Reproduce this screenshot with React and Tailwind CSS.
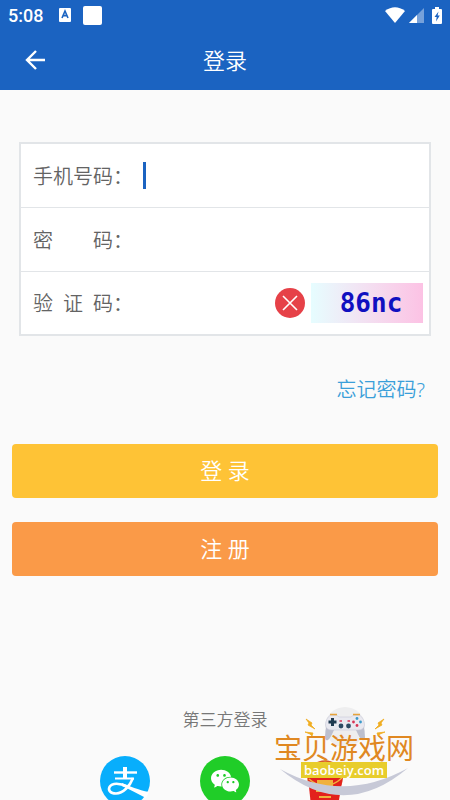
import { useState } from 'react';
import { AiFillWechat } from 'react-icons/ai';

const TEXT_FONT = "font-['Noto_Sans','Noto_Sans_CJK_SC',sans-serif]";

function StatusBar() {
    return (
        <div className="flex h-[30px] items-center pl-2 pr-2 text-white">
            <span className="pt-[2px] font-['Roboto',sans-serif] text-lg font-medium leading-6">5:08</span>
            <svg className="ml-4 h-[14px] w-3" viewBox="0 0 12 14">
                <rect width="12" height="14" rx="1" fill="#fff" />
                <path d="M3 10 L6 3 L9 10 M4.2 7.6 H7.8" fill="none" stroke="#1b63c1" strokeWidth="1.6" />
            </svg>
            <span className="ml-3 h-[19px] w-[19px] rounded-xs bg-white" />
            <div className="ml-auto flex items-center gap-1">
                <svg className="h-4 w-5" viewBox="0 0 20 16">
                    <path d="M0 4 Q10 -3.5 20 4 L10 16 Z" fill="#fff" />
                </svg>
                <svg className="h-[15px] w-[15px]" viewBox="0 0 15 15">
                    <path d="M15 0 V15 H0 Z" fill="#fff" opacity="0.4" />
                    <path d="M8 7 V15 H0 Z" fill="#fff" />
                </svg>
                <svg className="ml-1 h-[17px] w-[10px]" viewBox="0 0 10 17">
                    <path d="M3 0 H7 V2 H9 Q10 2 10 3 V16 Q10 17 9 17 H1 Q0 17 0 16 V3 Q0 2 1 2 H3 Z" fill="#fff" />
                    <path d="M6.5 4.5 L2.5 10 H4.7 L4 14.5 L7.8 8.6 H5.6 Z" fill="#1b63c1" />
                </svg>
            </div>
        </div>
    );
}

function FieldRow({ id, label, children }) {
    return (
        <div className="flex h-16 items-center pl-3 pr-[6px] last:h-[62px]">
            <label htmlFor={id} className="flex shrink-0 pt-[2px] text-xl leading-7 text-[#636363]">
                <span className="w-20 [text-align-last:justify]">{label}</span>
                <span>：</span>
            </label>
            {children}
        </div>
    );
}

function AlipayIcon() {
    return (
        <svg className="h-[50px] w-[50px]" viewBox="0 0 50 50">
            <circle cx="25" cy="25" r="25" fill="#08aefc" />
            <g fill="none" stroke="#fff">
                <path d="M14 16.500 H37" strokeWidth="2.400" />
                <path d="M25 11 V22" strokeWidth="4" />
                <path d="M15 22.500 H34" strokeWidth="2" />
                <path d="M33 22 C30 30 23 37.500 16 37.500 C10 37.500 8 34 9.500 31 C12 26.500 20 27 27 30.500" strokeWidth="2.600" />
            </g>
            <path d="M22 27 C30 30 38 34 49 36 L46 42 C38 38 31 34 22 30 Z" fill="#fff" />
        </svg>
    );
}

function RedPacketIcon() {
    return (
        <svg className="h-[50px] w-[50px]" viewBox="0 0 50 50">
            <circle cx="25" cy="22" r="17" fill="#f7d774" stroke="#d95b2b" strokeWidth="1.500" />
            <path d="M8 21 L43 20 L38 50 H11 Z" fill="#e3211c" />
            <path d="M9 23 Q25 37 42 22" fill="none" stroke="#f0b13c" strokeWidth="1.500" />
            <path d="M18 25 H32 V29 H18 Z M16 35 H34 M19 41 H31" fill="#f0b13c" stroke="#f0b13c" strokeWidth="2" />
        </svg>
    );
}

function SiteBadge() {
    return (
        <div className="pointer-events-none absolute bottom-0 right-[34px] flex h-24 w-36 flex-col items-center">
            <svg className="absolute inset-0 h-full w-full" viewBox="-2 0 144 96">
                <circle cx="71" cy="23" r="20" fill="#eeeeef" />
                <path d="M53 20 H89 Q91 27 91 33 Q91 37 88 36 Q86 35 82 26 H60 Q56 35 54 36 Q51 37 51 33 Q51 27 53 20 Z" fill="#bcbfce" />
                <path d="M56 11.500 H63 L65 13 H77 L79 11.500 H86 Q90 14 90.500 21 Q90 26 84 26 H58 Q52 26 51.500 21 Q52 14 56 11.500 Z" fill="#e9e9f0" stroke="#c9cbd8" strokeWidth="0.600" />
                <path d="M56 10.500 H63 M79 10.500 H86" stroke="#e7a33a" strokeWidth="1.600" />
                <path d="M58.500 14 V22 M54.500 18 H62.500" stroke="#1f3a50" strokeWidth="3" />
                <circle cx="67" cy="22" r="2.400" fill="#2c4a63" />
                <circle cx="74.500" cy="22" r="2.400" fill="#2c4a63" />
                <path d="M65.500 17 H68 M73.500 17 H76" stroke="#d73455" strokeWidth="1.400" />
                <circle cx="79.500" cy="18" r="1.400" fill="#d73455" />
                <circle cx="86.500" cy="18" r="1.400" fill="#3a99c9" />
                <circle cx="83" cy="14.500" r="1.400" fill="#3a99c9" />
                <circle cx="83" cy="21.500" r="1.400" fill="#d73455" />
                <g fill="#f0ad21" stroke="#f0ad21" strokeWidth="0.800">
                    <path d="M32 15 L38 19 L37 21 L41 25 L34 21 L35 19 Z" />
                    <path d="M31 28 L39 29 L38 32 L36 30 Z" />
                    <path d="M110 15 L104 19 L105 21 L101 25 L108 21 L107 19 Z" />
                    <path d="M111 28 L103 29 L104 32 L106 30 Z" />
                </g>
                <path d="M6 65 Q69 100 134 64 Q70 118 6 65 Z" fill="#c7c9d7" />
            </svg>
            <span className="relative mt-[30px] whitespace-nowrap text-[28px] font-normal leading-7 text-[#e08822]">宝贝游戏网</span>
            <span className="relative bg-[#e8cd2c] px-[3px] font-['Open_Sans',sans-serif] text-[13px] font-semibold leading-4 text-white">baobeiy.com</span>
        </div>
    );
}

export default function App() {
    const [phone, setPhone] = useState('');
    const [password, setPassword] = useState('');
    const [captcha, setCaptcha] = useState('');

    const inputClass = 'min-w-0 flex-1 bg-transparent text-xl text-[#444] outline-none';

    return (
        <div className={`relative flex h-screen flex-col overflow-hidden bg-[#fafafa] font-[350] ${TEXT_FONT}`}>
            <header className="shrink-0 bg-[#1b63c1] text-white">
                <StatusBar />
                <div className="grid h-[60px] grid-cols-3 items-center px-6">
                    <button type="button" aria-label="返回" className="justify-self-start">
                        <svg className="h-[22px] w-[22px]" viewBox="0 0 22 22" fill="none" stroke="#fff" strokeWidth="2.400">
                            <path d="M21 11 H3 M12 2 L3 11 L12 20" />
                        </svg>
                    </button>
                    <h1 className="text-center text-[22px] leading-8">登录</h1>
                </div>
            </header>

            <main className="flex flex-1 flex-col">
                <form className="flex flex-col" onSubmit={(e) => e.preventDefault()}>
                    <div className="mx-[19px] mt-[52px] divide-y divide-[#e2e5e8] border-2 border-[#e2e5e8] bg-white">
                        <FieldRow id="phone" label="手机号码">
                            <span className="ml-[10px] h-[27px] w-[3px] shrink-0 bg-[#1b63c1]" />
                            <input id="phone" type="tel" className={inputClass} value={phone} onChange={(e) => setPhone(e.target.value)} />
                        </FieldRow>
                        <FieldRow id="password" label="密 码">
                            <input id="password" type="password" className={inputClass} value={password} onChange={(e) => setPassword(e.target.value)} />
                        </FieldRow>
                        <FieldRow id="captcha" label="验 证 码">
                            <input id="captcha" className={inputClass} value={captcha} onChange={(e) => setCaptcha(e.target.value)} />
                            <button type="button" aria-label="清除" className="shrink-0" onClick={() => setCaptcha('')}>
                                <svg className="h-[30px] w-[30px]" viewBox="0 0 30 30">
                                    <circle cx="15" cy="15" r="15" fill="#e64148" />
                                    <path d="M8 8 L22 22 M22 8 L8 22" stroke="#fff" strokeWidth="1.600" />
                                </svg>
                            </button>
                            <button type="button" className="ml-[6px] h-10 w-28 shrink-0 bg-linear-to-r from-[#e6fdff] to-[#fcc2e4] pl-2 font-['DejaVu_Sans_Mono',monospace] text-[26px] font-bold leading-10 text-[#1010c0]">
                                86nc
                            </button>
                        </FieldRow>
                    </div>

                    <a href="#forgot" className="mr-[25px] mt-10 self-end text-xl leading-7 text-[#3a9fd9]">忘记密码?</a>

                    <div className="mx-3 mt-10 flex flex-col gap-6 text-[22px] text-white">
                        <button type="submit" className="h-[54px] rounded bg-[#fec336] pb-[2px]">登 录</button>
                        <button type="button" className="h-[54px] rounded bg-[#fa9a48] pb-[2px]">注 册</button>
                    </div>
                </form>

                <section className="-mb-[6px] mt-auto flex flex-col items-center">
                    <h2 className="text-[17px] leading-6 text-[#777]">第三方登录</h2>
                    <div className="mt-6 flex gap-[50px]">
                        <button type="button" aria-label="支付宝">
                            <AlipayIcon />
                        </button>
                        <button type="button" aria-label="微信" className="flex h-[50px] w-[50px] items-center justify-center rounded-full bg-[#20cd28] text-white">
                            <AiFillWechat className="h-8 w-8" />
                        </button>
                        <button type="button" aria-label="红包">
                            <RedPacketIcon />
                        </button>
                    </div>
                </section>
            </main>

            <SiteBadge />
        </div>
    );
}
